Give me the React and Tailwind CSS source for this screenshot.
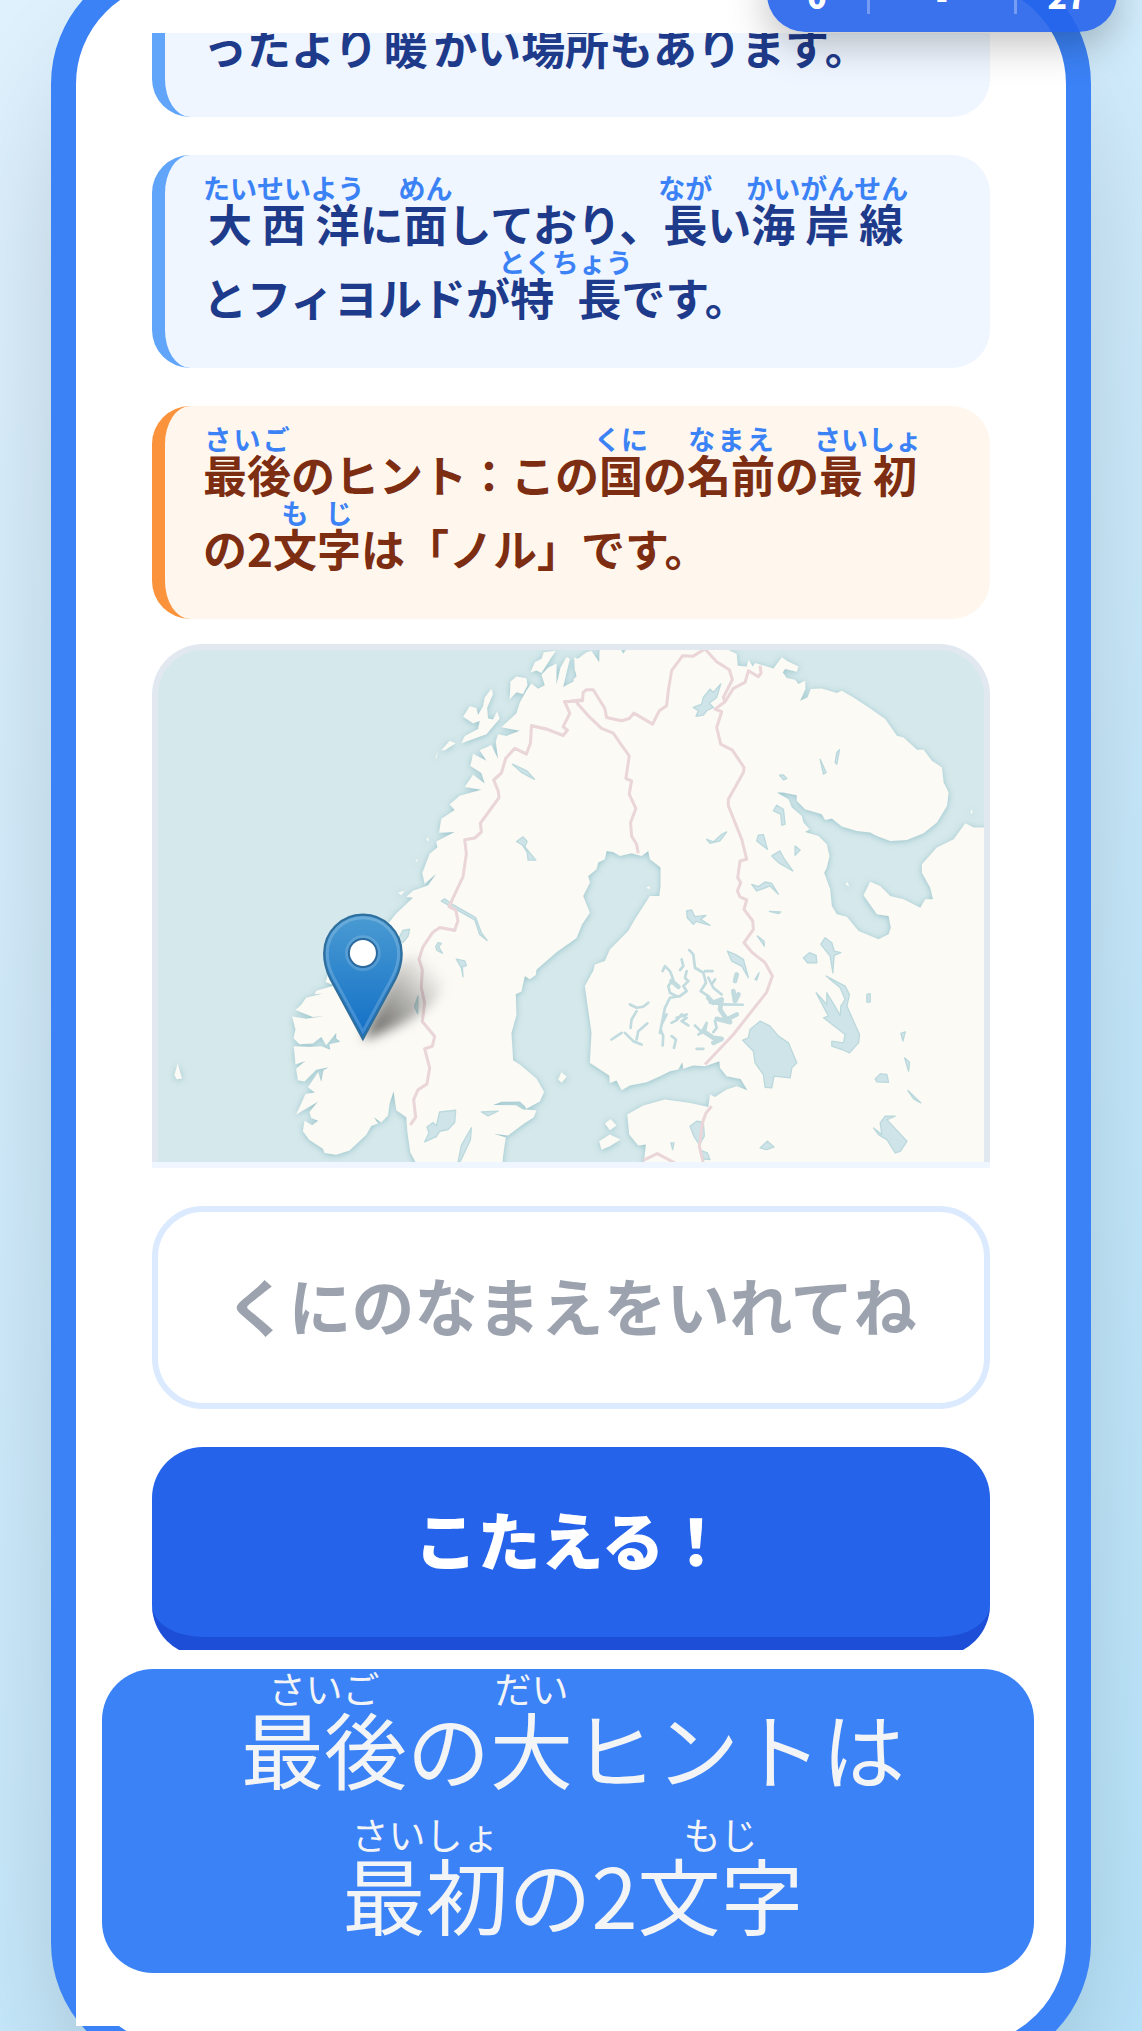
import React, { useState } from "react";

const hints = [
  {
    id: 2,
    tone: "border-[#60a5fa] bg-[#eff6ff] text-[#1e3a8a]",
    lines: [
      [["大西洋", "たいせいよう"], "に", ["面", "めん"], "しており、", ["長", "なが"], "い", ["海岸線", "かいがんせん"]],
      ["とフィヨルドが", ["特長", "とくちょう"], "です。"],
    ],
  },
  {
    id: 3,
    tone: "border-[#fb923c] bg-[#fff7ed] text-[#7c2d12]",
    lines: [
      [["最後", "さいご"], "のヒント：この", ["国", "くに"], "の", ["名前", "なまえ"], "の", ["最初", "さいしょ"]],
      ["の2", ["文字", "もじ"], "は「ノル」です。"],
    ],
  },
];

const firstHintLine = ["ったより", ["暖", "あたた"], "かい", ["場所", "ばしょ"], "もあります。"];

const FuriganaLine = ({ parts, rubyClass, rtClass }) => (
  <span className="block whitespace-nowrap">
    {parts.map((part, index) =>
      typeof part === "string" ? (
        <React.Fragment key={index}>{part}</React.Fragment>
      ) : (
        <ruby key={index} className={rubyClass}>
          {part[0]}
          <rt className={rtClass}>{part[1]}</rt>
        </ruby>
      )
    )}
  </span>
);

const HINT_RT = "text-[27px] leading-[27px] font-bold text-[#3b82f6]";
const BANNER_RUBY = "[ruby-align:center]";

const ScoreBadge = () => (
  <div className="absolute -top-12 right-[25px] z-10 flex h-20 w-[350px] items-end rounded-[38px] bg-[#2563eb]/90 pb-[18px] text-center text-[32px] leading-[38px] font-black text-white shadow-[0_12px_40px_rgba(0,0,0,0.25)]">
    <span className="w-[100px]">0</span>
    <span className="flex-1 border-x-[3px] border-white/30">-</span>
    <span className="w-[100px]">27</span>
  </div>
);

const CountryMap = () => (
  <div className="mt-[25px]">
    <div className="overflow-hidden rounded-t-[51px] border-x-[6px] border-t-[6px] border-[#e2e8f0] bg-[#d5e8eb]">
      <svg
        viewBox="56 62 2475 1536"
        preserveAspectRatio="xMidYMid slice"
        className="block h-[512px] w-full"
        role="img"
        aria-label="ちず"
      >
        <defs>
          <linearGradient id="pin" x1="0" y1="0" x2="0" y2="1">
            <stop offset="0" stopColor="#4a9bd2" />
            <stop offset="1" stopColor="#126fc6" />
          </linearGradient>
          <linearGradient id="pinShade" x1="0" y1="1" x2="1" y2="0">
            <stop offset="0" stopColor="#000" stopOpacity="0.65" />
            <stop offset="0.45" stopColor="#000" stopOpacity="0.32" />
            <stop offset="0.85" stopColor="#000" stopOpacity="0" />
          </linearGradient>
          <filter id="coast" x="-5%" y="-5%" width="110%" height="110%">
            <feDropShadow dx="0" dy="3" stdDeviation="9" floodColor="#8fbfc6" floodOpacity="0.9" />
          </filter>
          <filter id="soft" x="-40%" y="-40%" width="180%" height="180%">
            <feGaussianBlur stdDeviation="18" />
          </filter>
        </defs>

        {/* land */}
        <g fill="#fbfaf5" filter="url(#coast)">
          <g transform="scale(1 1.0524)">
            <path d="M1340 75L1312 85 1303 80 1305 118 1320 135 1300 150 1270 165 1290 85 1280 80 1262 110 1250 158 1250 98 1225 110 1205 130 1215 160 1195 170 1175 155 1160 175 1140 210 1130 240 1085 280 1140 290 1100 305 1075 300 1068 320 1075 370 1055 330 1020 345 1040 375 1000 355 992 390 1025 410 1035 440 1000 415 975 450 1025 458 960 475 930 500 945 515 905 540 898 580 945 578 890 605 893 622 870 640 848 695 855 725 890 697 865 730 820 745 800 762 820 765 770 810 745 840 600 980 565 985 558 1005 585 1015 530 1030 525 1040 550 1038 500 1050 485 1070 468 1085 520 1105 555 1102 500 1110 458 1103 468 1140 462 1165 480 1182 520 1180 545 1162 560 1185 590 1150 590 1165 602 1175 570 1182 572 1198 545 1188 510 1190 463 1188 468 1240 497 1230 470 1252 475 1285 495 1288 530 1255 568 1248 552 1256 545 1290 536 1262 505 1305 526 1320 498 1324 470 1382 535 1346 510 1375 515 1392 536 1400 518 1413 495 1400 490 1430 510 1455 550 1480 555 1492 590 1497 630 1485 680 1440 695 1415 715 1408 703 1390 725 1405 745 1385 750 1350 762 1316 770 1370 800 1390 803 1430 812 1490 828 1518 828 1570 1085 1570 1090 1500 1098 1448 1062 1437 1105 1442 1150 1410 1182 1390 1190 1370 1150 1368 1128 1356 1060 1355 1085 1346 1140 1345 1155 1358 1160 1366 1200 1345 1213 1318 1190 1280 1140 1240 1120 1228 1115 1150 1130 1100 1128 1040 1145 1032 1155 988 1170 997 1188 985 1190 970 1250 920 1310 880 1325 845 1300 700 1380 560 1380 110Z" />
            <path d="M1172 124L1185 95 1205 85 1212 66 1248 62 1232 85 1205 125 1190 118ZM1110 200L1112 150 1130 135 1160 140 1163 160 1150 185 1130 180ZM970 250L990 220 1010 225 1015 245 1030 220 1035 195 1055 170 1060 185 1042 225 1045 255 1060 258 1072 235 1080 255 1040 300 965 325 975 305 1015 285 1020 262 1000 268ZM905 345L930 318 948 325 915 345ZM888 365L895 350 890 370ZM775 750L795 745 785 758ZM860 600L866 592 868 605ZM105 1270L115 1238 128 1280 112 1282ZM1255 1282L1265 1262 1281 1275 1265 1292ZM828 658L834 656 832 664Z" />
          </g>
          <g transform="translate(1290 0)">
            <path d="M30 200L10 152 20 142 15 112 30 85 50 70 65 66 88 100 90 40 140 40 160 74 185 40 440 40 470 60 500 75 503 110 530 112 535 92 548 112 555 102 610 118 635 85 650 95 685 112 680 128 645 120 638 130 650 147 675 152 685 165 705 155 706 180 690 215 712 205 722 180 755 178 800 192 815 185 850 205 900 238 945 270 980 320 1000 325 1040 362 1060 362 1085 395 1115 415 1120 460 1135 490 1130 530 1100 580 1060 612 1010 632 960 635 920 620 900 610 860 605 815 592 785 568 765 572 755 555 705 540 680 515 680 498 640 490 620 490 655 510 665 535 695 560 700 580 718 600 705 608 745 620 770 645 778 680 770 715 762 730 780 780 785 830 800 855 830 862 865 905 925 930 955 915 962 895 955 860 920 855 880 798 900 757 930 770 960 800 1000 810 1050 835 1065 810 1088 810 1080 775 1055 730 1055 705 1100 655 1150 630 1185 582 1210 595 1300 595 1300 1660 215 1660 228 1545 205 1548 178 1515 172 1455 220 1428 285 1410 360 1420 415 1432 420 1395 435 1402 470 1380 500 1370 532 1382 512 1348 470 1340 450 1315 448 1295 405 1310 370 1308 340 1318 337 1298 325 1320 300 1325 270 1340 230 1358 180 1368 155 1382 140 1353 120 1360 118 1338 60 1300 65 1210 55 1140 45 1070 70 1025 75 1005 105 995 120 960 175 905 195 870 240 800 268 800 272 770 272 715 240 690 235 665 215 680 185 672 150 680 130 668 110 665 105 690 85 700 80 720 55 740 60 760 40 800 60 850 30 895 20 920 0 940 -60 970 -90 1000 -135 1042 -150 900 -20 500Z" />
            <path d="M105 1482L122 1468 140 1488 120 1502ZM88 1535L120 1515 152 1530 120 1550 95 1560ZM228 775L240 770 240 780ZM826 765L832 758 838 772ZM1200 548L1205 540 1206 555Z" />
          </g>
        </g>

        {/* lakes */}
        <g fill="#cfe4e8" stroke="#bbd9dd" strokeWidth="4" strokeLinejoin="round">
          <g transform="scale(1 1.0524)">
            <path d="M1118 385L1160 403 1184 428 1145 408ZM1130 605L1150 592 1162 605 1155 620 1172 640 1188 658 1165 658 1162 635 1148 615ZM905 775L915 768 940 785 1008 822 1025 865 1042 887 1020 870 1005 828ZM888 905L895 893 905 895 897 905 908 923 892 915ZM950 940L975 945 980 958 968 962 970 990 965 965ZM775 885L790 858 810 855 805 875 790 893ZM825 1075L835 1045 834 1095ZM855 1460L868 1435 862 1418 880 1405 890 1415 900 1375 948 1370 945 1405 925 1425 900 1430 890 1445ZM955 1518L965 1470 995 1420 992 1455 962 1515ZM1025 1375L1075 1373 1045 1386Z" />
          </g>
          <g transform="translate(1290 0)">
            <path d="M370 235L395 225 400 205 420 180 430 190 452 165 440 205 418 222 430 235 410 245 400 258 378 262 385 245ZM750 390L768 430 760 435ZM808 362L800 405 795 400 800 370ZM628 438L640 437 650 448 640 452ZM610 545L620 528 640 540 645 585 635 588 632 555ZM560 635L565 618 580 616 592 660ZM605 680L630 665 640 685 668 725 625 700ZM675 650L690 662 675 678ZM410 630L430 638 455 615 470 608 450 635 420 642ZM545 765L565 772 585 758 605 762 625 795 600 770 560 785ZM598 846L632 848 625 853ZM350 845L365 842 375 862 408 858 392 870 420 888 378 876 370 885 352 865Z" />
            <path d="M518 1232L535 1225 540 1200 570 1175 600 1190 625 1220 655 1240 680 1300 665 1315 660 1345 612 1340 605 1375 585 1373 580 1335 555 1300 550 1265ZM752 945L765 925 785 940 792 965 812 970 792 978 788 1030 780 980ZM700 985L718 970 738 978 740 1000 712 1000ZM768 1040L825 1070 838 1095 830 1130 868 1215 865 1240 838 1270 815 1260 785 1250 785 1235 820 1240 825 1215 760 1165 775 1160 738 1090 770 1125 770 1090 800 1140 810 1160 812 1130 825 1110 810 1075ZM890 1095L900 1093 900 1118 890 1118ZM992 1212L1005 1207 998 1235ZM1003 1285L1018 1298 1015 1325ZM915 1348L930 1333 950 1335 955 1358 920 1357ZM1013 1383L1052 1420 1030 1408ZM910 1495L935 1515 930 1480 945 1460 975 1460 950 1470 1010 1535 990 1565 975 1570 950 1530 925 1515ZM570 1555L592 1535 612 1552 590 1560ZM303 1540L312 1540 308 1560ZM562 920L582 935 583 950ZM360 1490L380 1475 400 1478 403 1520 388 1545 372 1520ZM392 1562L412 1570 420 1590 402 1588ZM472 965L495 975 520 990 535 1045 515 1010 485 995ZM555 1050L567 1030 560 1052Z" />
          </g>
        </g>
        <g
          transform="translate(1290 810)"
          fill="none"
          stroke="#c1dbdf"
          strokeWidth="8"
          strokeLinejoin="round"
          strokeLinecap="round"
        >
          <path d="M278 215L285 200 300 215 310 240 295 260 300 280 320 290M335 180L340 200 330 212M358 152L370 165 375 205 400 220 408 250 392 275 415 290 420 310 455 315 518 316M405 215L428 215M425 255L435 240M415 235L430 265 455 285M350 215L345 235 355 245 340 260 350 275 330 290 300 295 285 325 280 350 272 390 280 410 278 438M290 345L275 375 270 400M305 410L318 420 312 445M180 315L200 325 220 322 235 310M200 335L185 360 182 385M165 400L190 425 215 435M200 420L205 395 232 372M125 420L155 400M305 370L320 362 335 345 350 355 335 365 355 378M320 355L350 345M375 378L395 398 410 370 405 395 385 405M435 365L440 385 430 398M380 448L400 448" />
          <path
            strokeWidth="14"
            d="M415 295L430 310 455 300 450 330 470 360 500 345M400 395L430 415 455 418 430 430M490 275L495 305 505 285M500 225L495 245M440 358L480 368M305 245L325 262"
          />
        </g>

        {/* borders */}
        <g fill="none" stroke="#ead5d8" strokeWidth="9" strokeLinejoin="round">
          <path
            transform="scale(1 1.0524)"
            d="M812 1412L828 1390 822 1340 835 1312 862 1295 870 1250 855 1195 878 1188 885 1160 848 1118 855 1065 845 1020 848 970 838 940 850 905 878 865 900 850 945 858 955 830 948 800 928 790 970 705 980 640 975 600 1005 595 1025 578 1022 553 1078 480 1075 460 1062 430 1085 410 1098 368 1125 340 1160 356 1172 325 1175 275 1220 285 1270 303 1283 288 1270 278 1290 240 1275 208 1328 202"
          />
          <g transform="translate(1290 0)">
            <path d="M-20 218L38 215 40 190 50 182 70 182 105 238 110 265 155 275 178 268 192 252 248 285 268 245 290 230 295 185 305 125 338 80 368 82 405 60 440 98 478 122 487 152 460 205 465 218 490 178 525 160 535 125 565 143 573 132 570 110M465 218L435 240 455 248 440 295 452 345 487 363 522 415 520 430 475 510 475 530 515 630 530 690 510 695 503 745 512 760 502 785 510 803 530 812 522 840 548 875 550 900 522 940 545 968 585 1000 607 1040 590 1088 490 1215 405 1305M20 220L60 265 95 298 130 312 155 348 178 380 168 448 185 455 178 495 198 538 182 580 185 620 200 645 205 672M425 1430L408 1450 398 1478 388 1550 400 1600M220 1592L262 1572 315 1600" />
          </g>
        </g>

        {/* pin */}
        <path
          d="M670 1231L770 1010C850 940 920 960 915 1050 905 1130 790 1190 670 1231Z"
          fill="url(#pinShade)"
          filter="url(#soft)"
        />
        <path
          d="M670 1228L573 1049C560 1022 554 1000 554 972A116 116 0 0 1 786 972C786 1000 780 1022 767 1049Z"
          fill="url(#pin)"
          stroke="#2e6f9f"
          strokeWidth="7"
        />
        <path
          d="M670 1206L582 1044C569 1018 563 998 563 972A107 107 0 0 1 777 972C777 998 771 1018 758 1044Z"
          fill="none"
          stroke="#fff"
          strokeOpacity="0.18"
          strokeWidth="9"
        />
        <circle cx="670" cy="971" r="49" fill="none" stroke="#fff" strokeOpacity="0.15" strokeWidth="9" />
        <circle cx="670" cy="971" r="42" fill="#fff" stroke="#2b6a9e" strokeWidth="6" />
      </svg>
    </div>
    <div className="h-[6px] bg-[#eff6ff]"></div>
  </div>
);

const App = () => {
  const [answer, setAnswer] = useState("");

  const handleSubmit = (e) => {
    e.preventDefault();
    setAnswer("");
  };

  return (
    <main className="relative h-screen overflow-hidden bg-linear-135 from-[#e0f2fe] to-[#bae6fd] font-['Noto_Sans_CJK_JP',sans-serif]">
      <ScoreBadge />

      <div className="mx-[51px] -mt-[43px] rounded-[127px] border-[25px] border-[#3b82f6] bg-white pt-[51px] pb-[19px] shadow-[0_79px_158px_-38px_rgba(0,0,0,0.25)]">
        <form onSubmit={handleSubmit} className="overflow-hidden px-[76px]">
          <div className="flex h-[84px] items-end overflow-hidden rounded-b-[38px] border-l-[13px] border-[#60a5fa] bg-[#eff6ff] px-[38px] pb-[45px] text-[44px] leading-[51px] font-bold text-[#1e3a8a]">
            <FuriganaLine parts={firstHintLine} rtClass={HINT_RT} />
          </div>

          {hints.map((hint) => (
            <div
              key={hint.id}
              className={`mt-[38px] flex h-[213px] flex-col justify-end rounded-[38px] border-l-[13px] px-[38px] pb-[45px] text-[44px] leading-[51px] font-bold ${hint.tone}`}
            >
              {hint.lines.map((line, index) => (
                <FuriganaLine key={index} parts={line} rtClass={HINT_RT} />
              ))}
            </div>
          ))}

          <CountryMap />

          <input
            type="text"
            value={answer}
            onChange={(e) => setAnswer(e.target.value)}
            aria-label="くにのなまえ"
            placeholder="くにのなまえをいれてね"
            className="mt-[38px] block h-[203px] w-full rounded-[51px] border-[6px] border-[#dbeafe] bg-white pb-2 text-center text-[63px] font-bold text-[#1e3a8a] outline-none placeholder:text-[#9ca3af]"
          />

          <button
            type="submit"
            className="mt-[38px] -mb-[6px] block h-[209px] w-full rounded-[51px] border-b-[19px] border-[#1d4ed8] bg-[#2563eb] pb-2 text-[63px] font-black text-white"
          >
            こたえる！
          </button>
        </form>

        <div className="mr-[44px] bg-white pt-[19px] pb-[53px] pl-[26px]">
          <div className="-mr-[12px] flex h-[304px] flex-col justify-end rounded-[51px] bg-[#3b82f6] pb-[10px] pl-[10px] text-center text-[83px] leading-[140px] text-[#f3f4f6]">
            <FuriganaLine
              parts={[["最後", "さいご"], "の", ["大", "だい"], "ヒントは"]}
              rubyClass={BANNER_RUBY}
              rtClass="text-[37px] leading-[37px]"
            />
            <FuriganaLine
              parts={[["最初", "さいしょ"], "の2", ["文字", "もじ"]]}
              rubyClass={BANNER_RUBY}
              rtClass="text-[37px] leading-[57px]"
            />
          </div>
        </div>
      </div>
    </main>
  );
};

export default App;
